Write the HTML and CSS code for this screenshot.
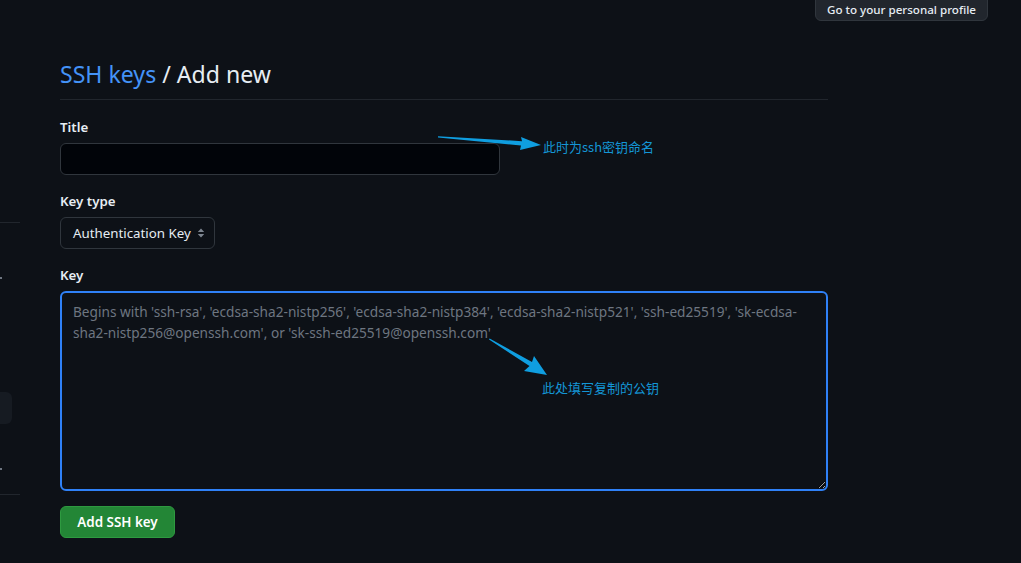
FILE: index.html
```html
<!DOCTYPE html>
<html lang="en">
<head>
<meta charset="utf-8">
<title>Add new SSH key</title>
<link rel="stylesheet" href="styles.css">
</head>
<body>
<div class="topbar">
  <a class="btn-profile" href="#">Go to your personal profile</a>
</div>
<div class="layout">
  <aside class="sidebar">
    <div class="side-line first"></div>
    <div class="side-mark m1"></div>
    <div class="side-box"></div>
    <div class="side-mark m2"></div>
    <div class="side-line last"></div>
  </aside>
  <main class="main">
    <h1 class="heading"><a href="#" class="crumb">SSH keys</a> / Add new</h1>
    <form class="form">
      <label class="label">Title</label>
      <input class="input title-input" type="text">
      <label class="label">Key type</label>
      <div class="select">
        <span class="sel-text">Authentication Key</span>
        <svg class="sel-icon" width="8" height="12" viewBox="0 0 8 12"><path d="M4 1.5 L7.2 5 H0.8 Z M4 10.5 L0.8 7 H7.2 Z" fill="#7d8590"/></svg>
      </div>
      <label class="label">Key</label>
      <div class="textarea">
        <textarea class="ta" placeholder="Begins with 'ssh-rsa', 'ecdsa-sha2-nistp256', 'ecdsa-sha2-nistp384', 'ecdsa-sha2-nistp521', 'ssh-ed25519', 'sk-ecdsa-&#10;sha2-nistp256@openssh.com', or 'sk-ssh-ed25519@openssh.com'"></textarea>
      </div>
      <div class="actions"><button type="button" class="btn-primary">Add SSH key</button></div>
    </form>
  </main>
</div>
<div class="note note1">此时为ssh密钥命名</div>
<div class="note note2">此处填写复制的公钥</div>
<svg class="arrows" width="1021" height="563" viewBox="0 0 1021 563">
  <polygon points="438,136.2 522,141.2 521,137 541,145 520,150 521,145.6 438,137.6" fill="#0f9ee0"/>
  <polygon points="489.6,338.6 532,362 534,356 547,375 524,371 529.5,366 489,339.6" fill="#0f9ee0"/>
</svg>
</body>
</html>
```
FILE: styles.css
```css
* { box-sizing: border-box; }
html, body { margin: 0; padding: 0; }
body {
  background: #0d1117;
  color: #e6edf3;
  font-family: "Noto Sans", "Liberation Sans", "Noto Sans CJK SC", sans-serif;
  font-size: 13.3px;
  width: 1021px;
  height: 563px;
  overflow: hidden;
  position: relative;
}
.topbar {
  display: flex;
  justify-content: flex-end;
  padding-right: 33px;
  height: 21px;
}
.btn-profile {
  display: block;
  margin-top: -11px;
  height: 32px;
  padding: 12px 0 0 0;
  width: 173px;
  background: #21262d;
  border: 1px solid #30363d;
  border-radius: 6px;
  color: #e6edf3;
  font-size: 11.6px;
  font-weight: 500;
  text-decoration: none;
  line-height: 16px;
  white-space: nowrap;
  text-align: center;
}
.layout {
  display: flex;
  gap: 40px;
}
.sidebar {
  width: 20px;
  display: flex;
  flex-direction: column;
}
.side-line { height: 1px; background: #21262d; width: 20px; }
.side-line.first { margin-top: 201px; }
.side-mark { width: 2px; height: 2px; background: #6e7681; }
.side-mark.m1 { margin-top: 54px; }
.side-box { width: 12px; height: 32px; background: #161b22; border-radius: 0 6px 6px 0; margin-top: 113px; }
.side-mark.m2 { margin-top: 44px; }
.side-line.last { margin-top: 24px; }
.main { width: 768px; }
.heading {
  margin: 35px 0 0 0;
  padding-bottom: 7px;
  border-bottom: 1px solid #21262d;
  font-size: 23.1px;
  font-weight: 400;
  line-height: 36px;
  color: #e6edf3;
}
.crumb { color: #4493f8; text-decoration: none; }
.form { display: flex; flex-direction: column; align-items: flex-start; }
.label {
  font-weight: 600;
  font-size: 13.3px;
  line-height: 20px;
  margin-top: 16px;
  margin-bottom: 6px;
}
.form .label:first-child { margin-top: 17px; }
.input {
  width: 440px;
  height: 32px;
  background: #010409;
  border: 1px solid #30363d;
  border-radius: 6px;
  color: #e6edf3;
}
.select {
  display: flex;
  align-items: center;
  height: 32px;
  width: 155px;
  padding: 0 9px 0 12px;
  border: 1px solid #30363d;
  border-radius: 6px;
  background: #0d1117;
  font-size: 13.3px;
  white-space: nowrap;
}
.sel-icon { margin-left: auto; }
.textarea { width: 768px; }
.ta {
  display: block;
  width: 768px;
  height: 200px;
  background: #0d1117;
  border: 2px solid #2f81f7;
  border-radius: 6px;
  padding: 8px 11px 6px 11px;
  color: #e6edf3;
  font-family: "Noto Sans", "Liberation Sans", sans-serif;
  font-size: 13.65px;
  line-height: 21px;
  outline: none;
  resize: vertical;
}
.ta::placeholder { color: #6e7681; }
.actions { margin-top: 15px; }
.btn-primary {
  height: 32px;
  width: 115px;
  background: #238636;
  border: 1px solid #2e9a40;
  border-radius: 6px;
  color: #ffffff;
  font-family: "Noto Sans", "Liberation Sans", sans-serif;
  font-size: 13.4px;
  font-weight: 600;
  padding: 0;
}
.note {
  position: absolute;
  color: #1496d6;
  font-family: "Noto Sans CJK SC", sans-serif;
  font-size: 13px;
  line-height: 18px;
  white-space: nowrap;
}
.note1 { left: 543px; top: 138px; }
.note2 { left: 542px; top: 379px; }
.arrows { position: absolute; left: 0; top: 0; pointer-events: none; }
```
